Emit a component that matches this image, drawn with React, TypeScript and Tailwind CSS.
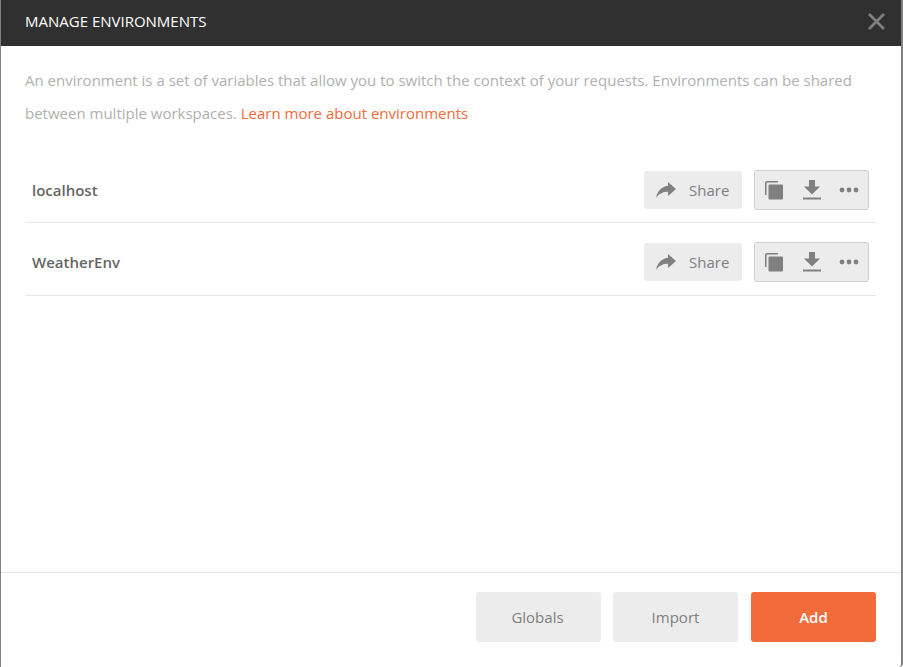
const environments = ['localhost', 'WeatherEnv'];

function CloseIcon() {
  return (
    <svg className="h-[17px] w-[17px]" viewBox="0 0 17 17" stroke="#808080" strokeWidth={2.8} fill="none">
      <path d="M1 1l15 15M16 1L1 16" />
    </svg>
  );
}

function ShareIcon() {
  return (
    <svg className="h-[18px] w-[20px]" viewBox="0 0 20 18" fill="#808080">
      <path d="M12 1l8 7-8 7v-4.200C7 10.800 3.300 12.400 0 17c1-6 4.700-11.400 12-12.200V1z" />
    </svg>
  );
}

function CopyIcon() {
  return (
    <svg className="h-[19px] w-[18px]" viewBox="0 0 18 19" fill="#808080">
      <path d="M2 0h11v1.500H2.500a1 1 0 00-1 1V14H0V2a2 2 0 012-2z" />
      <rect x="3.500" y="3.500" width="14.500" height="15" rx="1" />
    </svg>
  );
}

function DownloadIcon() {
  return (
    <svg className="h-[20px] w-[18px]" viewBox="0 0 18 20" fill="#808080">
      <path d="M6 0h6v6.500h5L9 14.500 1 6.500h5V0z" />
      <rect x="0" y="17.500" width="18" height="2" />
    </svg>
  );
}

function MoreIcon() {
  return (
    <svg className="h-[6px] w-[20px]" viewBox="0 0 20 6" fill="#808080">
      <circle cx="3" cy="3" r="2.400" />
      <circle cx="10" cy="3" r="2.400" />
      <circle cx="17" cy="3" r="2.400" />
    </svg>
  );
}

function EnvironmentRow({ name }: { name: string }) {
  return (
    <div className="mx-[1px] flex h-[73px] items-start border-b border-[#e6e6e6] pl-[6px] pr-[7px] pt-[19px] first:h-[72px]">
      <span className="flex-1 pt-[7px] text-[15px] leading-[26px] font-semibold text-[#666666]">{name}</span>
      <button
        type="button"
        className="mt-[1px] flex h-[38px] w-[98px] items-center rounded-[3px] bg-[#ececec] pl-[12px] text-[15px] text-[#808080]"
      >
        <ShareIcon />
        <span className="ml-[13px]">Share</span>
      </button>
      <div className="ml-[12px] flex h-[40px] w-[115px] items-center rounded-[3px] border border-[#cfcfcf] bg-[#ececec] pl-[10px]">
        <CopyIcon />
        <span className="ml-[20px] flex">
          <DownloadIcon />
        </span>
        <span className="ml-[18px] flex">
          <MoreIcon />
        </span>
      </div>
    </div>
  );
}

export default function App() {
  return (
    <div className="flex h-[667px] w-[903px] flex-col overflow-hidden rounded-br-[4px] border-r-2 border-l border-[#808080] bg-white font-['Open_Sans',sans-serif]">
      {/* Header */}
      <div className="flex h-[46px] shrink-0 items-center justify-between bg-[#303030] pb-[3px] pl-[24px] pr-[16px]">
        <h1 className="text-[15px] text-white">MANAGE ENVIRONMENTS</h1>
        <CloseIcon />
      </div>

      {/* Body */}
      <div className="flex-1 px-[24px] pt-[18px]">
        <p className="text-[15px] leading-[33px] text-[#b0b0b0]">
          An environment is a set of variables that allow you to switch the context of your requests. Environments can be shared between multiple workspaces.{' '}
          <a className="text-[#f26b3a]">Learn more about environments</a>
        </p>
        <div className="mt-[21px]">
          {environments.map((name) => (
            <EnvironmentRow key={name} name={name} />
          ))}
        </div>
      </div>

      {/* Footer */}
      <div className="flex h-[95px] shrink-0 justify-end gap-[12px] border-t border-[#e6e6e6] pr-[25px] pt-[19px]">
        <button type="button" className="h-[50px] w-[125px] rounded-[3px] bg-[#ececec] pr-[2px] text-[15px] text-[#808080]">
          Globals
        </button>
        <button type="button" className="h-[50px] w-[125px] rounded-[3px] bg-[#ececec] text-[15px] text-[#808080]">
          Import
        </button>
        <button type="button" className="ml-[1px] h-[50px] w-[125px] rounded-[3px] bg-[#f26b3a] text-[15px] font-semibold text-white">
          Add
        </button>
      </div>
    </div>
  );
}
